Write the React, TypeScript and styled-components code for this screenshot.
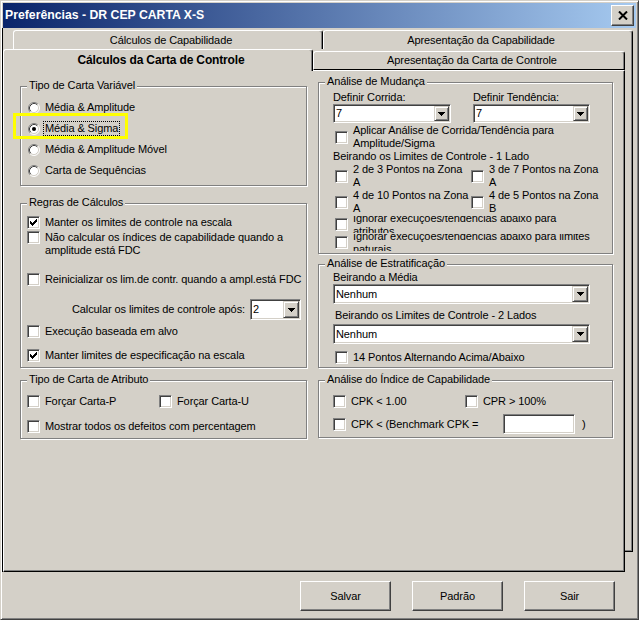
import React from "react";
import styled, { createGlobalStyle } from "styled-components";

const FACE = "#d4d0c8";
const SHADOW = "#808080";
const DARK = "#404040";

const GlobalStyle = createGlobalStyle`
  *, *::before, *::after { box-sizing: border-box; }
  html, body { margin: 0; padding: 0; background: ${FACE}; }
  body {
    font-family: "Liberation Sans", Arial, sans-serif;
    font-size: 11px;
    line-height: 13px;
    letter-spacing: -0.1px;
    color: #000;
  }
`;

/* ---------- window chrome ---------- */

const Window = styled.div`
  width: 639px;
  height: 620px;
  display: flex;
  flex-direction: column;
  padding: 2px;
  background: ${FACE};
  border: 1px solid;
  border-color: ${FACE} ${DARK} ${DARK} ${FACE};
  box-shadow: inset 1px 1px #fff, inset -1px -1px ${SHADOW};
`;

const TitleBar = styled.div`
  flex: 0 0 25px;
  display: flex;
  align-items: center;
  justify-content: space-between;
  padding: 0 2px;
  background: linear-gradient(to right, #0a246a, #a6caf0);
`;

const TitleText = styled.span`
  color: #fff;
  font-weight: bold;
  font-size: 12.25px;
  letter-spacing: 0;
  white-space: nowrap;
`;

const CloseButton = styled.div`
  width: 23px;
  height: 21px;
  display: flex;
  align-items: center;
  justify-content: center;
  background: ${FACE};
  border: 1px solid;
  border-color: #fff ${DARK} ${DARK} #fff;
  box-shadow: inset -1px -1px ${SHADOW};
  svg { display: block; }
`;

/* ---------- tab control ---------- */

const TabControl = styled.div`
  position: relative;
  flex: 0 0 auto;
  width: 623px;
  margin-left: -1px;
  padding-top: 2px;
  border-left: 1px solid #000;

  /* outline of the page that belongs to the rear row of tabs */
  &::before {
    content: "";
    position: absolute;
    left: 10px;
    top: 21px;
    width: 620px;
    height: 503px;
    border-right: 1px solid #000;
    border-bottom: 1px solid #000;
    box-shadow: inset -1px -1px ${SHADOW};
  }
`;

const BackRow = styled.div`
  position: relative;
  z-index: 1;
  display: flex;
  height: 19px;
  margin-left: 10px;
`;

const FrontRow = styled.div`
  position: relative;
  z-index: 2;
  display: flex;
  align-items: flex-end;
  height: 21px;
`;

const Tab = styled.div<{ $w: number; $h: number; $active?: boolean; $shut?: boolean }>`
  flex: 0 0 ${(p) => p.$w}px;
  height: ${(p) => p.$h}px;
  margin-bottom: ${(p) => (p.$active ? -1 : 0)}px;
  display: flex;
  align-items: center;
  justify-content: center;
  padding-left: 6px;
  background: ${FACE};
  border-top: 1px solid #fff;
  border-left: 1px solid #fff;
  border-right: 1px solid #000;
  border-bottom: ${(p) => (p.$shut ? "1px solid #000" : "none")};
  border-radius: 3px 3px 0 0;
  box-shadow: inset -1px 0 ${SHADOW};
  font-size: ${(p) => (p.$active ? 12 : 11)}px;
  font-weight: ${(p) => (p.$active ? "bold" : "normal")};
  letter-spacing: ${(p) => (p.$active ? "-0.15px" : "-0.1px")};
  white-space: nowrap;
`;

const Panel = styled.div`
  position: relative;
  z-index: 1;
  width: 622px;
  height: 502px;
  background: ${FACE};
  border: 1px solid;
  border-color: #fff #000 #000 #fff;
  box-shadow: inset -1px -1px ${SHADOW};
  padding-left: 16px;
  display: grid;
  grid-template-columns: 287px 295px;
  column-gap: 11px;
  align-items: start;
`;

const Column = styled.div`
  display: flex;
  flex-direction: column;
`;

/* ---------- group boxes ---------- */

const GroupBox = styled.div<{ $top: number; $h: number; $pt: number; $pl: number }>`
  position: relative;
  flex-shrink: 0;
  margin-top: ${(p) => p.$top}px;
  height: ${(p) => p.$h}px;
  padding: ${(p) => p.$pt}px 0 0 ${(p) => p.$pl}px;
  display: flex;
  flex-direction: column;
  border: 1px solid ${SHADOW};
  box-shadow: inset 1px 1px #fff, 1px 1px #fff;
`;

const Legend = styled.span`
  position: absolute;
  top: -8px;
  left: 6px;
  padding: 0 2px;
  line-height: 13px;
  background: ${FACE};
  white-space: nowrap;
`;

type GroupProps = {
  title: string;
  top: number;
  h: number;
  pt: number;
  pl: number;
  children: React.ReactNode;
};

function Group({ title, top, h, pt, pl, children }: GroupProps) {
  return (
    <GroupBox $top={top} $h={h} $pt={pt} $pl={pl}>
      <Legend>{title}</Legend>
      {children}
    </GroupBox>
  );
}

/* ---------- rows and captions ---------- */

const Row = styled.div<{
  $h: number;
  $mt?: number;
  $ml?: number;
  $pr?: number;
  $top?: boolean;
  $end?: boolean;
}>`
  position: relative;
  flex-shrink: 0;
  display: flex;
  align-items: ${(p) => (p.$top ? "flex-start" : "center")};
  justify-content: ${(p) => (p.$end ? "flex-end" : "flex-start")};
  gap: 4px;
  height: ${(p) => p.$h}px;
  margin-top: ${(p) => p.$mt ?? 0}px;
  margin-left: ${(p) => p.$ml ?? 0}px;
  padding-right: ${(p) => p.$pr ?? 0}px;
`;

const Split = styled.div<{ $cols: string; $h: number; $mt?: number; $ml?: number }>`
  flex-shrink: 0;
  display: grid;
  grid-template-columns: ${(p) => p.$cols};
  align-items: center;
  height: ${(p) => p.$h}px;
  margin-top: ${(p) => p.$mt ?? 0}px;
  margin-left: ${(p) => p.$ml ?? 0}px;
`;

const Cell = styled.div`
  display: flex;
  align-items: center;
  gap: 4px;
`;

const Caption = styled.span<{ $focus?: boolean; $w?: number }>`
  flex-shrink: 0;
  padding: 0 1px;
  line-height: 13px;
  white-space: nowrap;
  width: ${(p) => (p.$w ? `${p.$w}px` : "auto")};
  outline: ${(p) => (p.$focus ? "1px dotted #000" : "none")};
`;

const ClipCaption = styled.span`
  flex-shrink: 0;
  height: 17px;
  overflow: hidden;
  display: flex;
  flex-direction: column;
  justify-content: center;
  padding: 0 1px;

  & > span {
    flex-shrink: 0;
    line-height: 13px;
    white-space: nowrap;
  }
`;

const Note = styled.div<{ $mt?: number; $ml?: number }>`
  flex-shrink: 0;
  height: 13px;
  line-height: 13px;
  white-space: nowrap;
  margin-top: ${(p) => p.$mt ?? 0}px;
  margin-left: ${(p) => p.$ml ?? 0}px;
`;

const Highlight = styled.span`
  position: absolute;
  left: -14px;
  top: -5px;
  width: 115px;
  height: 26px;
  border: 3px solid #ffff00;
  pointer-events: none;
`;

const Paren = styled.span`
  margin-left: 3px;
`;

/* ---------- controls ---------- */

const CheckFrame = styled.span`
  display: block;
  flex: 0 0 13px;
  width: 13px;
  height: 13px;
  background: #fff;
  border: 1px solid;
  border-color: ${SHADOW} #fff #fff ${SHADOW};
  box-shadow: inset 1px 1px ${DARK}, inset -1px -1px ${FACE};
  svg { display: block; }
`;

function CheckBox({ checked }: { checked?: boolean }) {
  return (
    <CheckFrame>
      {checked && (
        <svg width="11" height="11" viewBox="0 0 11 11" shapeRendering="crispEdges">
          <path
            fill="#000"
            d="M2 4h1v3h-1z M3 5h1v3h-1z M4 6h1v3h-1z M5 5h1v3h-1z M6 4h1v3h-1z M7 3h1v3h-1z M8 2h1v3h-1z"
          />
        </svg>
      )}
    </CheckFrame>
  );
}

const RadioSvg = styled.svg`
  display: block;
  flex: 0 0 12px;
  margin-left: 1px;
`;

function Radio({ on }: { on?: boolean }) {
  return (
    <RadioSvg width="12" height="12" viewBox="0 0 12 12">
      <circle cx="6" cy="6" r="5" fill="#fff" />
      <path d="M2.11 9.89A5.5 5.5 0 0 1 9.89 2.11" stroke={SHADOW} fill="none" />
      <path d="M9.89 2.11A5.5 5.5 0 0 1 2.11 9.89" stroke="#fff" fill="none" />
      <path d="M2.82 9.18A4.5 4.5 0 0 1 9.18 2.82" stroke={DARK} fill="none" />
      <path d="M9.18 2.82A4.5 4.5 0 0 1 2.82 9.18" stroke={FACE} fill="none" />
      {on && <circle cx="6" cy="6" r="2" fill="#000" />}
    </RadioSvg>
  );
}

const Sunken = styled.div<{ $w: number; $h: number; $mt?: number }>`
  flex-shrink: 0;
  display: flex;
  width: ${(p) => p.$w}px;
  height: ${(p) => p.$h}px;
  margin-top: ${(p) => p.$mt ?? 0}px;
  padding: 1px;
  background: #fff;
  border: 1px solid;
  border-color: ${SHADOW} #fff #fff ${SHADOW};
  box-shadow: inset 1px 1px ${DARK}, inset -1px -1px ${FACE};
`;

const ComboValue = styled.span`
  flex: 1;
  display: flex;
  align-items: center;
  padding-left: 1px;
  white-space: nowrap;
`;

const DropButton = styled.span<{ $w: number }>`
  flex: 0 0 ${(p) => p.$w}px;
  height: 100%;
  display: flex;
  align-items: center;
  justify-content: center;
  background: ${FACE};
  border: 1px solid;
  border-color: ${FACE} ${DARK} ${DARK} ${FACE};
  box-shadow: inset 1px 1px #fff, inset -1px -1px ${SHADOW};
  svg { display: block; }
`;

type ComboProps = { w: number; h: number; value: string; btn?: number; mt?: number };

function Combo({ w, h, value, btn = 16, mt }: ComboProps) {
  return (
    <Sunken $w={w} $h={h} $mt={mt}>
      <ComboValue>{value}</ComboValue>
      <DropButton $w={btn}>
        <svg width="7" height="4" viewBox="0 0 7 4" shapeRendering="crispEdges">
          <path fill="#000" d="M0 0h7v1h-1v1h-1v1h-1v1h-1v-1h-1v-1h-1v-1h-1z" />
        </svg>
      </DropButton>
    </Sunken>
  );
}

const ButtonBar = styled.div`
  flex-shrink: 0;
  display: flex;
  justify-content: flex-end;
  gap: 21px;
  margin-top: 9px;
  padding-right: 21px;
`;

const PushButton = styled.div`
  width: 91px;
  height: 30px;
  display: flex;
  align-items: center;
  justify-content: center;
  background: ${FACE};
  border: 1px solid;
  border-color: #fff ${DARK} ${DARK} #fff;
  box-shadow: inset -1px -1px ${SHADOW};
`;

export default function App() {
  return (
    <>
      <GlobalStyle />
      <Window>
        <TitleBar>
          <TitleText>Preferências - DR CEP CARTA X-S</TitleText>
          <CloseButton>
            <svg width="10" height="9" viewBox="0 0 10 9">
              <path d="M1 0.5L9 8.5M9 0.5L1 8.5" stroke="#000" strokeWidth="2" />
            </svg>
          </CloseButton>
        </TitleBar>

        <TabControl>
          <BackRow>
            <Tab $w={310} $h={19}>Cálculos de Capabilidade</Tab>
            <Tab $w={310} $h={19}>Apresentação da Capabilidade</Tab>
          </BackRow>
          <FrontRow>
            <Tab $w={310} $h={22} $active>
              Cálculos da Carta de Controle
            </Tab>
            <Tab $w={312} $h={19} $shut>
              Apresentação da Carta de Controle
            </Tab>
          </FrontRow>

          <Panel>
            <Column>
              <Group title="Tipo de Carta Variável" top={15} h={100} pt={10} pl={6}>
                <Row $h={21}>
                  <Radio />
                  <Caption>Média &amp; Amplitude</Caption>
                </Row>
                <Row $h={21}>
                  <Highlight />
                  <Radio on />
                  <Caption $focus>Média &amp; Sigma</Caption>
                </Row>
                <Row $h={21}>
                  <Radio />
                  <Caption>Média &amp; Amplitude Móvel</Caption>
                </Row>
                <Row $h={21}>
                  <Radio />
                  <Caption>Carta de Sequências</Caption>
                </Row>
              </Group>

              <Group title="Regras de Cálculos" top={17} h={165} pt={10} pl={6}>
                <Row $h={17}>
                  <CheckBox checked />
                  <Caption>Manter os limites de controle na escala</Caption>
                </Row>
                <Row $h={26} $top>
                  <CheckBox />
                  <Caption>
                    Não calcular os índices de capabilidade quando a
                    <br />
                    amplitude está FDC
                  </Caption>
                </Row>
                <Row $h={17} $mt={14}>
                  <CheckBox />
                  <Caption>Reinicializar os lim.de contr. quando a ampl.está FDC</Caption>
                </Row>
                <Row $h={21} $mt={11} $end $pr={5}>
                  <Caption>Calcular os limites de controle após:</Caption>
                  <Combo w={51} h={21} value="2" />
                </Row>
                <Row $h={17} $mt={3}>
                  <CheckBox />
                  <Caption>Execução baseada em alvo</Caption>
                </Row>
                <Row $h={17} $mt={7}>
                  <CheckBox checked />
                  <Caption>Manter limites de especificação na escala</Caption>
                </Row>
              </Group>

              <Group title="Tipo de Carta de Atributo" top={12} h={59} pt={12} pl={6}>
                <Split $cols="132px 1fr" $h={17}>
                  <Cell>
                    <CheckBox />
                    <Caption>Forçar Carta-P</Caption>
                  </Cell>
                  <Cell>
                    <CheckBox />
                    <Caption>Forçar Carta-U</Caption>
                  </Cell>
                </Split>
                <Row $h={17} $mt={8}>
                  <CheckBox />
                  <Caption>Mostrar todos os defeitos com percentagem</Caption>
                </Row>
              </Group>
            </Column>

            <Column>
              <Group title="Análise de Mudança" top={11} h={172} pt={8} pl={14}>
                <Split $cols="140px 1fr" $h={13}>
                  <Note>Definir Corrida:</Note>
                  <Note>Definir Tendência:</Note>
                </Split>
                <Split $cols="140px 1fr" $h={19}>
                  <Combo w={118} h={19} value="7" btn={15} />
                  <Combo w={117} h={19} value="7" btn={15} />
                </Split>
                <Row $h={26} $mt={1} $ml={2}>
                  <CheckBox />
                  <Caption>
                    Aplicar Análise de Corrida/Tendência para
                    <br />
                    Amplitude/Sigma
                  </Caption>
                </Row>
                <Note>Beirando os Limites de Controle - 1 Lado</Note>
                <Split $cols="136px 1fr" $h={26} $ml={2}>
                  <Cell>
                    <CheckBox />
                    <Caption>
                      2 de 3 Pontos na Zona
                      <br />A
                    </Caption>
                  </Cell>
                  <Cell>
                    <CheckBox />
                    <Caption>
                      3 de 7 Pontos na Zona
                      <br />A
                    </Caption>
                  </Cell>
                </Split>
                <Split $cols="136px 1fr" $h={26} $ml={2}>
                  <Cell>
                    <CheckBox />
                    <Caption>
                      4 de 10 Pontos na Zona
                      <br />A
                    </Caption>
                  </Cell>
                  <Cell>
                    <CheckBox />
                    <Caption>
                      4 de 5 Pontos na Zona
                      <br />B
                    </Caption>
                  </Cell>
                </Split>
                <Row $h={17} $mt={1} $ml={2}>
                  <CheckBox />
                  <ClipCaption>
                    <span>
                      Ignorar execuções/tendências abaixo para
                      <br />
                      atributos
                    </span>
                  </ClipCaption>
                </Row>
                <Row $h={17} $mt={1} $ml={2}>
                  <CheckBox />
                  <ClipCaption>
                    <span>
                      Ignorar execuções/tendências abaixo para limites
                      <br />
                      naturais
                    </span>
                  </ClipCaption>
                </Row>
              </Group>

              <Group title="Análise de Estratificação" top={10} h={104} pt={6} pl={14}>
                <Note>Beirando a Média</Note>
                <Combo w={257} h={20} value="Nenhum" />
                <Note $mt={5} $ml={2}>
                  Beirando os Limites de Controle - 2 Lados
                </Note>
                <Combo w={257} h={20} value="Nenhum" mt={2} />
                <Row $h={17} $mt={5} $ml={2}>
                  <CheckBox />
                  <Caption>14 Pontos Alternando Acima/Abaixo</Caption>
                </Row>
              </Group>

              <Group title="Análise do Índice de Capabilidade" top={12} h={58} pt={12} pl={14}>
                <Split $cols="132px 1fr" $h={17}>
                  <Cell>
                    <CheckBox />
                    <Caption>CPK &lt; 1.00</Caption>
                  </Cell>
                  <Cell>
                    <CheckBox />
                    <Caption>CPR &gt; 100%</Caption>
                  </Cell>
                </Split>
                <Row $h={20} $mt={4}>
                  <CheckBox />
                  <Caption $w={149}>CPK &lt; (Benchmark CPK =</Caption>
                  <Sunken $w={72} $h={20} />
                  <Paren>)</Paren>
                </Row>
              </Group>
            </Column>
          </Panel>
        </TabControl>

        <ButtonBar>
          <PushButton>Salvar</PushButton>
          <PushButton>Padrão</PushButton>
          <PushButton>Sair</PushButton>
        </ButtonBar>
      </Window>
    </>
  );
}
